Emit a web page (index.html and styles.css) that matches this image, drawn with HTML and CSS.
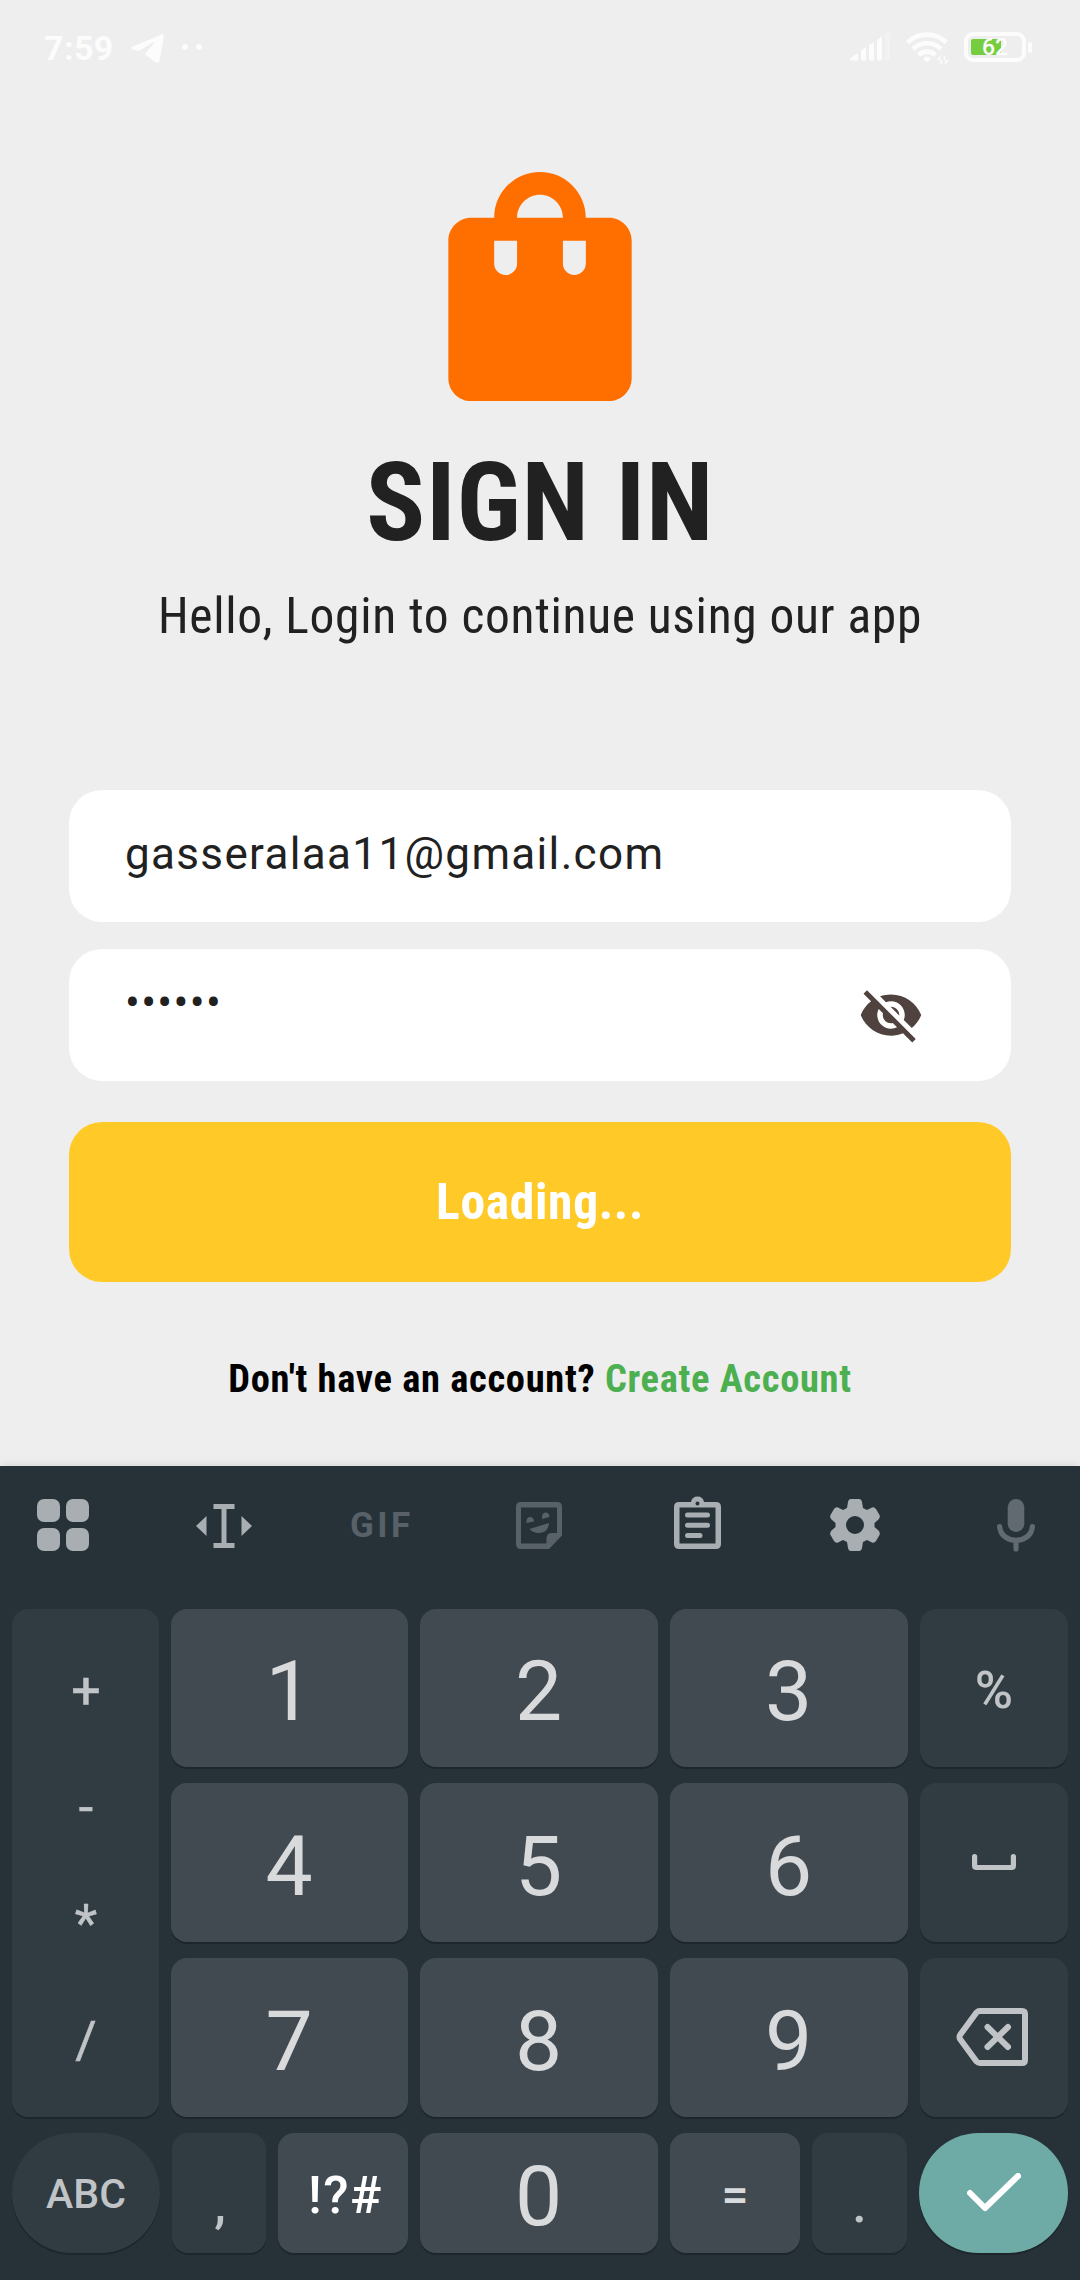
FILE: index.html
```html
<!DOCTYPE html>
<html lang="en">
<head>
<meta charset="utf-8">
<title>Sign in</title>
<link rel="stylesheet" href="styles.css">
</head>
<body>
<div class="screen">
  <header class="status">
    <span class="clock">7:59</span>
    <svg class="telegram" width="34" height="30" viewBox="0 0 34 30"><path d="M1.6 12.9 31.2.4Q33.9-.4 33.8 2.4L29.6 26.4Q28.6 30 25.4 28.3L15.9 21.2Q14.6 20 16 18.6L24 9.3Q24.4 7.800 22.600 8.500L10.800 16Q8.800 17.100 6.600 16.500L1.600 15.200Q-.8 14 1.600 12.900Z"/></svg>
    <i class="dot"></i><i class="dot"></i>
    <span class="spacer"></span>
    <svg class="signal" width="40" height="29" viewBox="0 0 40 29"><path d="M0 28.500V26.500L8 21V27Q8 28.500 6.500 28.500Z"/><path d="M11 18.500 16 15V27Q16 28.500 14.500 28.500H12.500Q11 28.500 11 27Z"/><path d="M19 13 24 10V27Q24 28.500 22.500 28.500H20.500Q19 28.500 19 27Z"/><path d="M27 8 32 4.500V27Q32 28.500 30.500 28.500H28.500Q27 28.500 27 27Z"/><path opacity=".3" d="M35 2 40 0V27Q40 28.500 38.500 28.500H36.500Q35 28.500 35 27Z"/></svg>
    <svg class="wifi" width="43" height="34" viewBox="0 0 43 34"><g fill="none" stroke="#fcfcfc" stroke-width="4.600"><path d="M1.500 10.500A28 28 0 0 1 40.500 10.500"/><path d="M7 17A20 20 0 0 1 35 17"/><path d="M12.500 23A12.500 12.500 0 0 1 29.500 23"/></g><path d="M17 26.500Q21 22.500 25 26.500L21 30.500Z"/><path d="M31 28 34.500 23V32.500H36V28ZM42.500 28 39 33.500V23.500H37.800V28Z"/></svg>
    <span class="battery"><i class="charge"></i><b class="level">62</b></span><i class="nub"></i>
  </header>

  <main class="login">
    <svg class="bag" viewBox="0 0 24 24"><path d="M18 6h-2c0-2.210-1.790-4-4-4S8 3.790 8 6H6c-1.100 0-2 .9-2 2v12c0 1.100.9 2 2 2h12c1.100 0 2-.9 2-2V8c0-1.100-.9-2-2-2zm-8 4c0 .55-.45 1-1 1s-1-.45-1-1V8h2v2zm2-6c1.100 0 2 .9 2 2h-4c0-1.100.9-2 2-2zm4 6c0 .55-.45 1-1 1s-1-.45-1-1V8h2v2z"/></svg>
    <h1 class="title">SIGN IN</h1>
    <p class="subtitle">Hello, Login to continue using our app</p>
    <div class="field email">gasseralaa11@gmail.com</div>
    <div class="field password"><span class="dots">••••••</span>
      <svg class="eye" viewBox="0 0 24 24"><path d="M12 7c2.760 0 5 2.240 5 5 0 .65-.13 1.260-.36 1.830l2.920 2.920c1.510-1.260 2.700-2.890 3.430-4.750-1.730-4.390-6-7.500-11-7.500-1.400 0-2.740.25-3.980.7l2.160 2.160C10.740 7.130 11.350 7 12 7zM2 4.270l2.280 2.280.46.46C3.080 8.300 1.780 10.020 1 12c1.730 4.390 6 7.500 11 7.500 1.550 0 3.030-.3 4.380-.84l.42.42L19.730 22 21 20.730 3.270 3 2 4.270zM7.530 9.800l1.550 1.550c-.05.21-.08.43-.08.65 0 1.660 1.340 3 3 3 .22 0 .44-.03.65-.08l1.550 1.550c-.67.33-1.410.53-2.200.53-2.760 0-5-2.240-5-5 0-.79.2-1.530.53-2.200zm4.310-.78l3.150 3.150.02-.16c0-1.660-1.340-3-3-3l-.17.01z"/></svg>
    </div>
    <button class="submit">Loading...</button>
    <p class="signup">Don't have an account? <a class="create">Create Account</a></p>
  </main>

  <section class="keyboard">
    <nav class="tools">
      <svg class="tool t-grid" width="52" height="52" viewBox="0 0 52 52"><rect width="23" height="23" rx="7"/><rect x="29" width="23" height="23" rx="7"/><rect y="29" width="23" height="23" rx="7"/><rect x="29" y="29" width="23" height="23" rx="7"/></svg>
      <svg class="tool t-cursor" width="56" height="44" viewBox="0 0 56 44"><path d="M17.500 0h21v5h-8v34h8v5h-21v-5h8V5h-8zM10.500 12v20L0 22zM45.500 12v20L56 22z"/></svg>
      <span class="tool t-gif">GIF</span>
      <svg class="tool t-sticker dim" width="46" height="47" viewBox="0 0 46 47"><path fill-rule="evenodd" d="M5 0H41Q46 0 46 5V33.500L33 47H5Q0 47 0 42V5Q0 0 5 0ZM5 5.500V41.500H30.500V36Q31 31 36 31H41V5.500Z"/><path d="M10.500 21Q10 15 14.500 15Q18 15.500 18 19.500ZM26 17Q25.500 10.500 30 10.500Q33.500 11 33.500 15ZM13.500 27 33 21Q32.500 30.500 23 31Q17 31 13.500 27Z"/></svg>
      <svg class="tool t-clip" width="47" height="53" viewBox="0 0 47 53"><path fill-rule="evenodd" d="M5 6H17Q18 .5 23.500 .5T30 6H42Q47 6 47 11V48Q47 53 42 53H5Q0 53 0 48V11Q0 6 5 6ZM5.500 11.500V47.500H41.500V11.500ZM23.500 5.500A2 2 0 1 0 23.500 9.500A2 2 0 1 0 23.500 5.500Z"/><path fill="none" stroke="#a8aeb1" stroke-width="5" stroke-linecap="round" d="M13.500 19H33.500M13.500 29.300H33.500M13.500 39.500H26"/></svg>
      <svg class="tool t-gear" width="50" height="52" viewBox="0 0 50 52"><path fill-rule="evenodd" d="M21 0H29Q31.500 0 32 3L33 9L37 11L42 8.500Q44.500 7.800 46 10L49.500 16Q50.500 18.500 48.500 20.500L44.500 24V28L48.500 31.500Q50.500 33.500 49.500 36L46 42Q44.500 44.200 42 43.500L37 41L33 43L32 49Q31.500 52 29 52H21Q18.500 52 18 49L17 43L13 41L8 43.500Q5.500 44.200 4 42L.5 36Q-.5 33.500 1.500 31.500L5.500 28V24L1.500 20.500Q-.5 18.500 .5 16L4 10Q5.500 7.800 8 8.500L13 11L17 9L18 3Q18.500 0 21 0ZM25 17A9 9 0 1 0 25 35A9 9 0 1 0 25 17Z"/></svg>
      <svg class="tool t-mic dim" width="38" height="53" viewBox="0 0 38 53"><rect x="10.700" width="16.600" height="33" rx="8.300"/><path fill="none" stroke="#616a71" stroke-width="5.200" stroke-linecap="round" d="M2.600 27.500C4 46 34 46 35.400 27.500M19 42V50"/></svg>
    </nav>
    <div class="pad">
      <div class="key side ops"><span>+</span><span>-</span><span>*</span><span>/</span></div>
      <div class="key digit">1</div><div class="key digit">2</div><div class="key digit">3</div>
      <div class="key side percent">%</div>
      <div class="key digit">4</div><div class="key digit">5</div><div class="key digit">6</div>
      <div class="key side"><svg width="44" height="17" viewBox="0 0 44 17"><path class="line" d="M2.600 2.600V11.500Q2.600 13.500 4.600 13.500H39.400Q41.400 13.500 41.400 11.500V2.600"/></svg></div>
      <div class="key digit">7</div><div class="key digit">8</div><div class="key digit">9</div>
      <div class="key side"><svg class="backspace" width="72" height="58" viewBox="0 0 72 58"><path class="line erase" d="M24 3H66Q69 3 69 6V52Q69 55 66 55H24Q22 55 20.500 53.500L4 31Q3 29 4 27L20.500 4.500Q22 3 24 3ZM31.500 19 52 39M52 19 31.500 39"/></svg></div>
    </div>
    <div class="bottom">
      <div class="key side abc">ABC</div>
      <div class="key side comma">,</div>
      <div class="key symbols">!?#</div>
      <div class="key digit zero">0</div>
      <div class="key equals">=</div>
      <div class="key side period">.</div>
      <div class="key done"><svg width="54" height="40" viewBox="0 0 54 40"><path d="M3 20 18 35 51 3"/></svg></div>
    </div>
  </section>
</div>
</body>
</html>
```
FILE: styles.css
```css
* { box-sizing: border-box; }
body { margin: 0; background: #eee; font-family: Roboto, "Liberation Sans", sans-serif; }
.screen { width: 1080px; height: 2280px; display: flex; flex-direction: column; overflow: hidden; background: #eee; }
svg { display: block; flex: none; }

/* Status bar */
.status { height: 96px; flex: none; display: flex; align-items: flex-start; padding: 0 48px 0 44px; color: #fcfcfc; fill: #fcfcfc; }
.clock { width: 70px; margin: 28px 16px 0 0; font-size: 34px; line-height: 40px; font-weight: 700; letter-spacing: .4px; }
.telegram { margin: 34px 18px 0 0; }
.dot { width: 6px; height: 6px; margin: 44px 8px 0 0; border-radius: 50%; background: #fcfcfc; }
.spacer { flex: 1; }
.signal { margin: 32px 16px 0 0; }
.wifi { margin: 32px 15px 0 0; }
.battery { width: 62px; height: 30px; margin-top: 32px; display: flex; align-items: center; padding-left: 3px; border: 4px solid #fcfcfc; border-radius: 9px; }
.charge { width: 30px; height: 16px; flex: none; border-radius: 2px; background: #76ce3f; }
.level { margin: 2px 0 0 -19px; font-size: 23px; line-height: 22px; font-weight: 500; }
.nub { width: 4px; height: 11px; margin: 42px 0 0 2px; border-radius: 2px; background: #fcfcfc; }

/* Login form */
.login { height: 1370px; flex: none; padding: 53px 69px 0; display: flex; flex-direction: column; color: #212121; }
.bag { width: 276px; height: 275px; align-self: center; fill: #ff6f00; }
.title { margin: 14px 0 0; font: 700 110px/129px Roboto, sans-serif; font-stretch: 75%; letter-spacing: .6875px; text-align: center; }
.subtitle { margin: 20px 0 145px; font-size: 49.5px; line-height: 58px; font-stretch: 75%; letter-spacing: .6875px; text-align: center; }
.field { height: 132px; padding: 38px 56px 0; border-radius: 33px; background: #fff; font-size: 44px; line-height: 52px; letter-spacing: 1.34px; }
.password { margin: 27px 0 41px; padding-top: 28px; display: flex; justify-content: space-between; }
.eye { width: 66px; height: 66px; margin: 5px 31.5px 0 0; fill: #50423e; }
.submit { height: 160px; border: 0; padding: 0; border-radius: 33px; background: #ffca28; color: #fff; font: 700 49.5px/58px Roboto, sans-serif; font-stretch: 75%; letter-spacing: .6875px; }
.signup { margin: 74px 0 0; color: #000; font-size: 38.5px; line-height: 46px; font-weight: 700; font-stretch: 75%; letter-spacing: .6875px; text-align: center; }
.create { color: #4caf50; }

/* Keyboard */
.keyboard { height: 814px; flex: none; padding: 0 12px; background: #263238; box-shadow: 0 0 10px rgba(0, 0, 0, .12); }
.tools { height: 143px; display: flex; align-items: flex-start; padding-left: 25px; fill: #a8aeb1; }
.t-grid { margin-top: 33px; }
.t-cursor { margin: 38px 0 0 107px; }
.t-gif { width: 66px; margin: 39px 0 0 98px; color: #586168; font-size: 35px; line-height: 42px; font-weight: 700; letter-spacing: 3.5px; }
.t-sticker { margin: 36px 0 0 100px; }
.t-clip { margin: 30px 0 0 112px; }
.t-gear { margin: 33px 0 0 109px; }
.t-mic { margin: 33px 0 0 117px; }
.dim { fill: #586168; }
.t-mic { fill: #616a71; }
.pad { display: grid; grid-template-columns: 147px 237px 238px 238px 148px; grid-template-rows: 158px 159px 159px; gap: 16px 12px; }
.key { display: flex; align-items: center; justify-content: center; border-radius: 16px; background: #424a51; color: #d8dadc; box-shadow: 0 2px 0 #1d262b; }
.side { background: #313b42; color: #c0c4c7; font-size: 52px; }
.digit { font-size: 84px; line-height: 98px; padding: 8px 1px 0 0; }
.ops { grid-row: span 3; flex-direction: column; justify-content: flex-start; padding: 24px 0 0 1px; }
.ops span { height: 116.5px; line-height: 116.5px; -webkit-text-stroke: .5px #c0c4c7; }
.percent { padding-top: 4px; font-weight: 500; }
.line { fill: none; stroke: #c0c4c7; stroke-width: 5.200; stroke-linecap: round; }
.backspace { margin: 0 4px 2px 0; }
.erase { stroke-width: 6; }
.bottom { height: 120px; margin-top: 16px; display: flex; gap: 12px; }
.abc { width: 148px; padding-top: 2px; border-radius: 60px; font-size: 41px; font-weight: 500; }
.comma { width: 94px; padding: 22px 0 0 2px; font-weight: 500; }
.symbols { width: 130px; padding: 4px 0 0 5px; font-size: 52px; font-weight: 500; letter-spacing: 1.5px; color: #fff; }
.zero { width: 238px; }
.equals { width: 130px; padding-top: 2px; font-size: 48px; font-weight: 500; }
.period { width: 95px; padding-top: 22px; font-weight: 500; }
.done { width: 149px; border-radius: 60px; background: #6faba6; }
.done path { fill: none; stroke: #fff; stroke-width: 6; stroke-linecap: round; stroke-linejoin: round; }
```
